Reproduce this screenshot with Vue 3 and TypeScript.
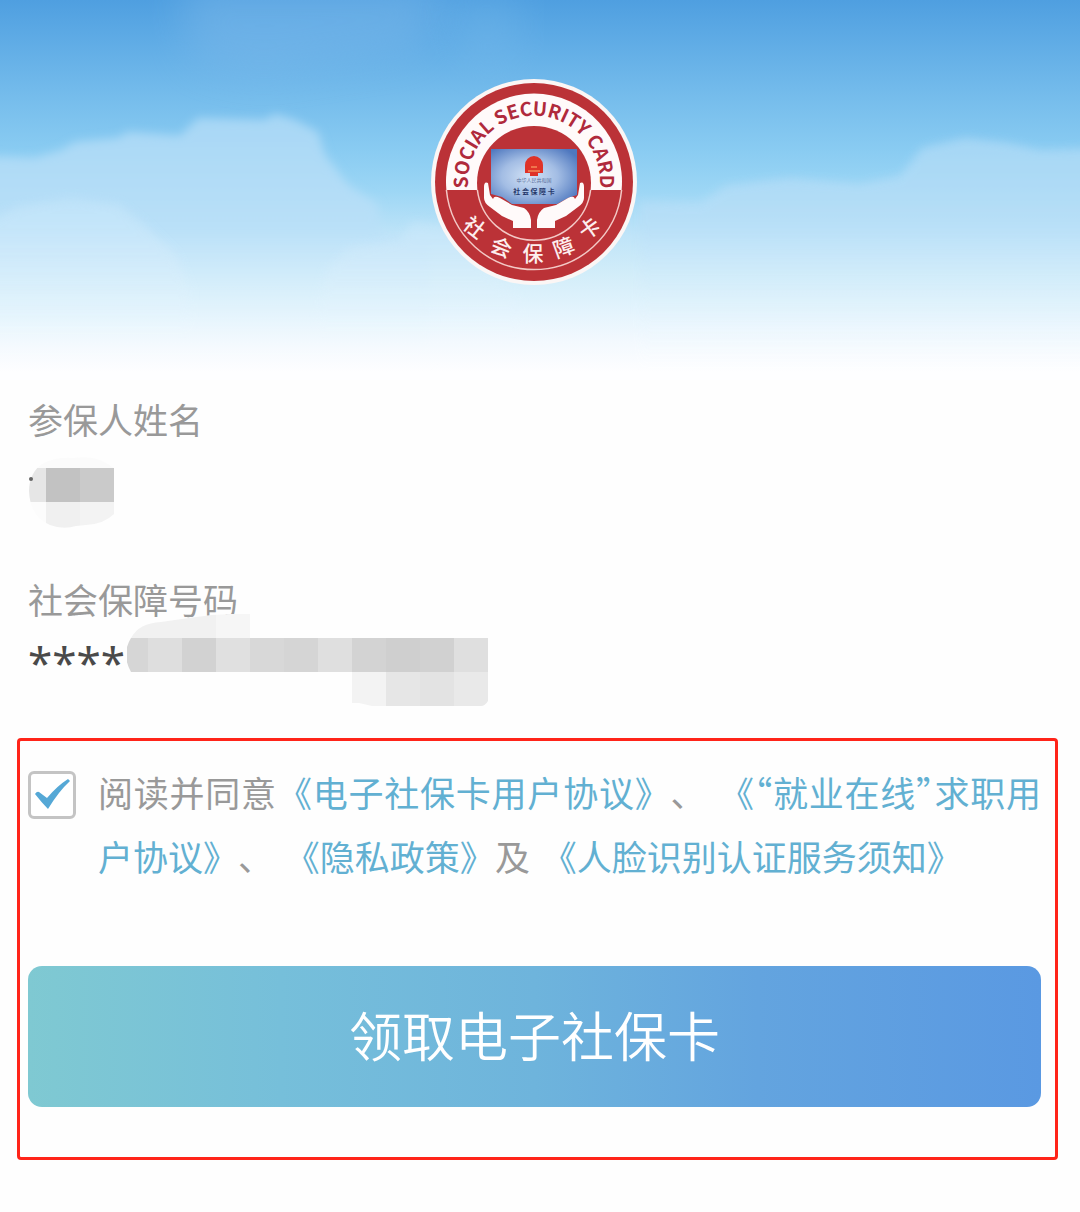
<script setup lang="ts">
import { ref } from 'vue'

interface Tile {
  x: number
  y: number
  w: number
  h: number
  fill: string
}

interface SealGlyph {
  char: string
  x: number
  y: number
  turn: number
}

const agreed = ref(true)

const sealGlyphs: SealGlyph[] = [
  { char: '社', x: -60, y: 46, turn: 38 },
  { char: '会', x: -33, y: 66, turn: 22 },
  { char: '保', x: -1, y: 72, turn: 0 },
  { char: '障', x: 30, y: 66, turn: -20 },
  { char: '卡', x: 56, y: 47, turn: -36 },
]

const nameTiles: Tile[] = [
  { x: 0, y: 0, w: 86, h: 11, fill: '#fbfbfb' },
  { x: 0, y: 11, w: 18, h: 34, fill: '#e6e6e6' },
  { x: 18, y: 11, w: 34, h: 34, fill: '#c2c2c2' },
  { x: 52, y: 11, w: 34, h: 34, fill: '#cacaca' },
  { x: 0, y: 45, w: 18, h: 26, fill: '#fcfcfc' },
  { x: 18, y: 45, w: 34, h: 26, fill: '#f0f0f0' },
  { x: 52, y: 45, w: 34, h: 26, fill: '#f3f3f3' },
]

const rowShades: string[] = [
  '#dedede', '#d2d2d2', '#e0e0e0', '#d8d8d8', '#d5d5d5',
  '#dfdfdf', '#d3d3d3', '#cfcfcf', '#d1d1d1', '#dfdfdf',
]

const numberTiles: Tile[] = [
  { x: 0, y: 0, w: 89, h: 24, fill: '#f1f1f1' },
  { x: 89, y: 0, w: 34, h: 24, fill: '#f6f6f6' },
  { x: 0, y: 24, w: 21, h: 34, fill: '#d6d6d6' },
  ...rowShades.map((fill, i) => ({ x: 21 + i * 34, y: 24, w: 34, h: 34, fill })),
  { x: 225, y: 58, w: 34, h: 34, fill: '#f3f3f3' },
  { x: 259, y: 58, w: 34, h: 34, fill: '#e6e6e6' },
  { x: 293, y: 58, w: 34, h: 34, fill: '#e3e3e3' },
  { x: 327, y: 58, w: 34, h: 34, fill: '#e9e9e9' },
]
</script>

<template>
  <div class="page">
    <header class="hero">
      <svg class="sky" viewBox="0 0 1080 380" preserveAspectRatio="none" aria-hidden="true">
        <defs>
          <linearGradient id="sky" x1="0" y1="0" x2="0" y2="1">
            <stop offset="0" stop-color="#4f9fe0" />
            <stop offset="0.12" stop-color="#61ade6" />
            <stop offset="0.26" stop-color="#76bdec" />
            <stop offset="0.4" stop-color="#8accf2" />
            <stop offset="0.5" stop-color="#9cd6f5" />
            <stop offset="0.62" stop-color="#bfe4f8" />
            <stop offset="0.72" stop-color="#d2edf9" />
            <stop offset="0.82" stop-color="#e4f4fd" />
            <stop offset="0.9" stop-color="#f3f9fe" />
            <stop offset="0.98" stop-color="#fefeff" />
          </linearGradient>
          <linearGradient id="cloud" gradientUnits="userSpaceOnUse" x1="0" y1="110" x2="0" y2="370">
            <stop offset="0" stop-color="#a6d6f5" />
            <stop offset="0.45" stop-color="#b9e0f8" />
            <stop offset="0.7" stop-color="#d8effb" stop-opacity="0.6" />
            <stop offset="1" stop-color="#ffffff" stop-opacity="0" />
          </linearGradient>
          <linearGradient id="cloudNear" gradientUnits="userSpaceOnUse" x1="0" y1="190" x2="0" y2="370">
            <stop offset="0" stop-color="#c0e4fa" />
            <stop offset="0.4" stop-color="#d4ecfb" stop-opacity="0.9" />
            <stop offset="0.8" stop-color="#eef8fe" stop-opacity="0" />
          </linearGradient>
          <filter id="soft" x="-10%" y="-20%" width="120%" height="140%">
            <feGaussianBlur stdDeviation="5" />
          </filter>
          <filter id="haze" x="-30%" y="-50%" width="160%" height="200%">
            <feGaussianBlur stdDeviation="20" />
          </filter>
        </defs>
        <rect width="1080" height="380" fill="url(#sky)" />
        <path d="M180 -20H450L420 50 260 75 190 60Z" fill="#7fbaea" opacity="0.45" filter="url(#haze)" />
        <path d="M440 0 520 -10 520 60 470 70Z" fill="#7dbdec" opacity="0.3" filter="url(#haze)" />
        <path
          d="M-20 156 35 158 62 150 75 142 118 138 128 132 180 136 198 118 265 120 275 114 295 120 318 132 325 155 348 185 378 205 380 232 430 240 430 370H-20Z"
          fill="url(#cloud)" filter="url(#soft)"
        />
        <path
          d="M640 202 700 204 725 186 790 178 860 184 900 176 922 148 965 138 1008 143 1040 150 1100 148V370H640Z"
          fill="url(#cloud)" opacity="0.85" filter="url(#soft)"
        />
        <path
          d="M-20 225 20 206 70 198 118 204 148 228 176 256 190 290V370H-20Z"
          fill="url(#cloudNear)" opacity="0.7" filter="url(#soft)"
        />
        <path
          d="M318 300 328 268 350 248 400 240 412 222 450 226 480 260 520 300V370H318Z"
          fill="url(#cloudNear)" opacity="0.6" filter="url(#soft)"
        />
      </svg>

      <svg class="seal" viewBox="-103 -103 206 206" role="img" aria-label="社会保障卡">
        <defs>
          <path id="sealArc" d="M-65.7 6A66 66 0 1 1 65.7 6" />
          <radialGradient id="card" cx="0.45" cy="0.5" r="0.65">
            <stop offset="0" stop-color="#d3e3f6" />
            <stop offset="0.5" stop-color="#a3bde4" />
            <stop offset="1" stop-color="#4f78bf" />
          </radialGradient>
        </defs>
        <circle r="103" fill="#fbf6f5" />
        <circle r="99" fill="#bb3237" />
        <path d="M-87.6 8A88 88 0 1 1 87.6 8Z" fill="#fffafa" />
        <path d="M-87.6 8A88 88 0 0 0 87.6 8" fill="none" stroke="#f3c9c6" stroke-width="1.5" />
        <circle r="57" cy="1" fill="#bb3237" />
        <path d="M-56.6 8A57 57 0 0 0 56.6 8" fill="none" stroke="#f3c9c6" stroke-width="1.5" />
        <text class="seal-latin">
          <textPath href="#sealArc" startOffset="50%" text-anchor="middle">SOCIAL SECURITY CARD</textPath>
        </text>
        <text
          v-for="g in sealGlyphs" :key="g.char" class="seal-han"
          :transform="`translate(${g.x} ${g.y}) rotate(${g.turn})`" y="7"
        >{{ g.char }}</text>
        <path d="M-43-33H43V13L34 16 23 22H-22L-32 15-43 12Z" fill="url(#card)" />
        <g fill="#df3328">
          <path d="M-9-17A9 9 0 0 1 9-17V-9H4V-6H-4V-9H-9Z" />
          <path d="M-6-11H6M-3-15H3" stroke="#f58a58" stroke-width="1.5" />
        </g>
        <text class="card-small" y="0">中华人民共和国</text>
        <text class="card-name" y="12">社 会 保 障 卡</text>
        <path
          id="hand"
          d="M-46 1Q-50-1-50 5V16Q-50 21-44 25L-32 34-21 39V46H-3V38Q-4 30-10 26L-22 23-34 16Q-40 13-41 17L-44 13Z"
          fill="#fffafa"
        />
        <use href="#hand" transform="scale(-1 1)" />
      </svg>
    </header>

    <main>
      <dl class="fields">
        <div class="field">
          <dt>参保人姓名</dt>
          <dd class="name">
            <svg width="86" height="71" viewBox="0 0 86 71" aria-hidden="true">
              <clipPath id="nameClip">
                <path d="M1 34C1 22 6 11 16 6Q28 0 45 1 65-2 78 6L86 11V57Q76 67 58 68L48 69Q35 73 22 68 2 60 1 34Z" />
              </clipPath>
              <g clip-path="url(#nameClip)">
                <rect
                  v-for="(t, i) in nameTiles" :key="i" :x="t.x" :y="t.y"
                  :width="t.w" :height="t.h" :fill="t.fill"
                />
              </g>
              <circle cx="3" cy="22" r="2" fill="#666666" />
            </svg>
          </dd>
        </div>
        <div class="field">
          <dt>社会保障号码</dt>
          <dd class="number">
            ****
            <svg class="mask" width="361" height="92" viewBox="0 0 361 92" aria-hidden="true">
              <clipPath id="numberClip">
                <path d="M4 58Q-6 40 4 24 12 9 34 8 60 4 85 1L123-1V24H361V87Q358 92 354 92H245L232 89H225V58Z" />
              </clipPath>
              <g clip-path="url(#numberClip)">
                <rect
                  v-for="(t, i) in numberTiles" :key="i" :x="t.x" :y="t.y"
                  :width="t.w" :height="t.h" :fill="t.fill"
                />
              </g>
            </svg>
          </dd>
        </div>
      </dl>

      <form class="consent" @submit.prevent>
        <div class="terms">
          <span class="tick">
            <input id="agree" v-model="agreed" type="checkbox">
            <svg v-if="agreed" viewBox="0 0 48 48" aria-hidden="true">
              <path d="M7 23Q9 20 11 21L19 27Q29 15 40 8L42 10Q31 20 20 38 14 32 7 23Z" fill="#55a8d6" />
            </svg>
          </span>
          <p>
            <label for="agree">阅读并同意</label><a href="#user">《电子社保卡用户协议》</a>、
            <a href="#jobs">《<span class="half">“</span>就业在线<span class="half">”</span>求职用户协议》</a>、
            <a href="#privacy">《隐私政策》</a>及
            <a href="#face">《人脸识别认证服务须知》</a>
          </p>
        </div>
        <button type="submit">领取电子社保卡</button>
      </form>
    </main>
  </div>
</template>

<style>
body {
  margin: 0;
  background: #fefefe;
}
</style>

<style scoped>
.page {
  padding-bottom: 48px;
  font-family: "Noto Sans CJK SC", sans-serif;
  font-size: 35px;
  color: #999999;
}

.hero {
  position: relative;
  display: flex;
  justify-content: center;
  padding: 79px 12px 95px 0;
}

.sky {
  position: absolute;
  inset: 0;
  width: 100%;
  height: 100%;
}

.seal {
  position: relative;
  width: 206px;
  height: 206px;
}

.seal-latin {
  font-size: 19px;
  font-weight: 700;
  fill: #b02a3c;
}

.seal-han {
  font-size: 21px;
  font-weight: 500;
  text-anchor: middle;
  fill: #fdeeee;
}

.card-small {
  font-size: 5px;
  text-anchor: middle;
  fill: #5c6f9c;
}

.card-name {
  font-size: 7px;
  font-weight: 700;
  text-anchor: middle;
  fill: #26386b;
}

.fields {
  display: grid;
  gap: 48px;
  margin: 0;
  padding: 16px 28px 48px;
}

dt {
  padding-bottom: 4px;
  line-height: 46px;
}

dd {
  margin: 0;
}

.name {
  display: flex;
  padding-top: 11px;
}

.number {
  position: relative;
  padding-top: 8px;
  line-height: 56px;
  font-family: "Noto Sans", sans-serif;
  font-size: 44px;
  color: #4a4a4a;
}

.mask {
  position: absolute;
  left: 99px;
  top: -12px;
}

.consent {
  margin: 0 22px 0 17px;
  padding: 19px 14px 50px 8px;
  border: 3px solid #ff2419;
  border-radius: 4px;
}

.terms {
  display: flex;
  gap: 22px;
}

.tick {
  position: relative;
  flex: none;
  width: 48px;
  height: 48px;
  margin-top: 11px;
}

.tick input {
  appearance: none;
  display: block;
  box-sizing: border-box;
  width: 48px;
  height: 48px;
  margin: 0;
  border: 3px solid #c4c4c4;
  border-radius: 6px;
  background: #ffffff;
}

.tick svg {
  position: absolute;
  inset: 0;
  pointer-events: none;
}

.terms p {
  flex: 1;
  margin: 0;
  line-height: 64px;
  text-align: justify;
  text-spacing-trim: space-all;
}

a {
  color: #62b0d2;
  text-decoration: none;
}

a + a {
  margin-left: 4px;
}

.half {
  font-feature-settings: "halt";
}

button {
  display: block;
  width: 100%;
  margin-top: 78px;
  padding: 28px 0 33px;
  border: 0;
  border-radius: 14px;
  background: linear-gradient(90deg, #7fc9d2, #76bfda 25%, #6eb4dc 50%, #63a4df 72%, #5a99e2);
  color: #ffffff;
  font-family: inherit;
  font-size: 53px;
  font-weight: 350;
  line-height: 80px;
}
</style>
